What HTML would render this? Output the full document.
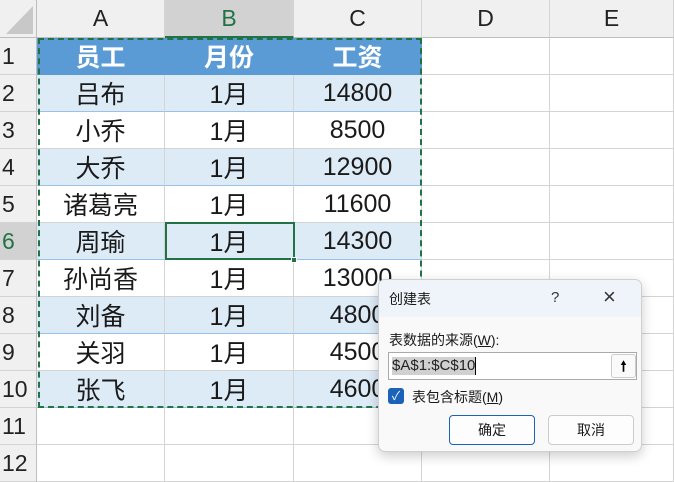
<!DOCTYPE html>
<html><head><meta charset="utf-8"><style>
*{margin:0;padding:0;box-sizing:border-box}
body{width:674px;height:480px;overflow:hidden;background:#fff;font-family:"Liberation Sans","Noto Sans CJK SC",sans-serif;position:relative}
.a{position:absolute}
.ch{position:absolute;top:0;height:38px;background:#f0f0f0;border-right:1px solid #d4d4d4;border-bottom:1px solid #bdbdbd;font-size:23px;color:#222;display:flex;align-items:center;justify-content:center}
.rh{position:absolute;left:0;width:37px;height:37px;background:#f0f0f0;border-bottom:1px solid #d4d4d4;border-right:1px solid #bdbdbd;font-size:23px;color:#222;display:flex;align-items:center;justify-content:flex-start;padding-left:2px}
.c{position:absolute;height:37px;border-right:1px solid #d4d4d4;border-bottom:1px solid #d4d4d4;font-size:25px;color:#1a1a1a;display:flex;align-items:center;justify-content:center}
.hd{background:#5b9bd5;color:#fff;font-weight:bold;border-color:#5b9bd5}
.bd{background:#ddebf7;border-bottom-color:#9bc2e6}
.btn{position:absolute;top:415px;height:30px;border:1px solid #ccc;border-radius:4px;background:#fdfdfd;font-size:14px;display:flex;align-items:center;justify-content:center;color:#1a1a1a}
</style></head><body>
<div class="a" style="left:0;top:0;width:37px;height:38px;background:#f0f0f0;border-right:1px solid #bdbdbd;border-bottom:1px solid #bdbdbd"></div>
<svg class="a" style="left:0;top:0" width="37" height="38"><polygon points="33,6 33,34 6,34" fill="#c8c8c8"/></svg>
<div class="ch" style="left:37px;width:128px">A</div>
<div class="ch" style="left:165px;width:129px;background:#d2d2d2;color:#217346;border-bottom:2px solid #217346">B</div>
<div class="ch" style="left:294px;width:128px">C</div>
<div class="ch" style="left:422px;width:128px">D</div>
<div class="ch" style="left:550px;width:124px">E</div>
<div id="g"></div>
<script>
var d=[["员工","月份","工资"],["吕布","1月","14800"],["小乔","1月","8500"],["大乔","1月","12900"],["诸葛亮","1月","11600"],["周瑜","1月","14300"],["孙尚香","1月","13000"],["刘备","1月","4800"],["关羽","1月","4500"],["张飞","1月","4600"],["","",""],["","",""]];
var xs=[37,165,294,422,550],ws=[128,129,128,128,124],h="";
for(var r=0;r<12;r++){var t=38+37*r;
h+='<div class="rh" style="top:'+t+'px'+(r==5?';background:#d2d2d2;color:#217346':'')+'">'+(r+1)+'</div>';
for(var c=0;c<5;c++){var cl="c";if(r==0&&c<3)cl+=" hd";else if(r<10&&c<3&&r%2==1)cl+=" bd";
h+='<div class="'+cl+'" style="left:'+xs[c]+'px;top:'+t+'px;width:'+ws[c]+'px">'+(c<3?d[r][c]:"")+'</div>';}}
document.getElementById("g").innerHTML=h;
</script>
<div class="a" style="left:38px;top:38px;width:384px;height:370px;border:2px dashed #217346"></div>
<div class="a" style="left:165px;top:222px;width:130px;height:38px;border:2px solid #217346"></div>
<div class="a" style="left:291px;top:257px;width:6px;height:6px;background:#217346;border:1px solid #fff"></div>
<div class="a" style="left:378px;top:279px;width:264px;height:173px;background:#f9f9f9;border:1px solid #cfcfcf;border-radius:7px;box-shadow:0 4px 12px rgba(0,0,0,.2);overflow:hidden">
<div class="a" style="left:0;top:0;width:264px;height:37px;background:#eef4f9"></div>
<div class="a" style="left:10px;top:9px;font-size:14px;color:#1a1a1a">创建表</div>
<div class="a" style="left:172px;top:9px;font-size:15px;color:#333">?</div>
<div class="a" style="left:224px;top:4px;font-size:22px;color:#333">×</div>
<div class="a" style="left:10px;top:50px;font-size:14px;color:#1a1a1a">表数据的来源(<u>W</u>):</div>
<div class="a" style="left:9px;top:72px;width:249px;height:28px;background:#fff;border:1px solid #aaa"></div>
<div class="a" style="left:13px;top:77px;background:#d0d0d0;font-size:15px;color:#222;line-height:18px;border-right:1px solid #000">$A$1:$C$10</div>
<div class="a" style="left:232px;top:74px;width:25px;height:24px;border:1px solid #ccc;border-radius:3px;background:#fafafa;font-size:14px;text-align:center;line-height:22px;font-weight:bold">🠕</div>
<div class="a" style="left:9px;top:108px;width:16px;height:16px;background:#1a63b8;border-radius:3px;color:#fff;font-size:12px;text-align:center;line-height:16px">✓</div>
<div class="a" style="left:33px;top:107px;font-size:14px;color:#1a1a1a">表包含标题(<u>M</u>)</div>
</div>
<div class="btn" style="left:449px;width:86px;border:1px solid #1a63b8">确定</div>
<div class="btn" style="left:548px;width:86px">取消</div>
</body></html>
